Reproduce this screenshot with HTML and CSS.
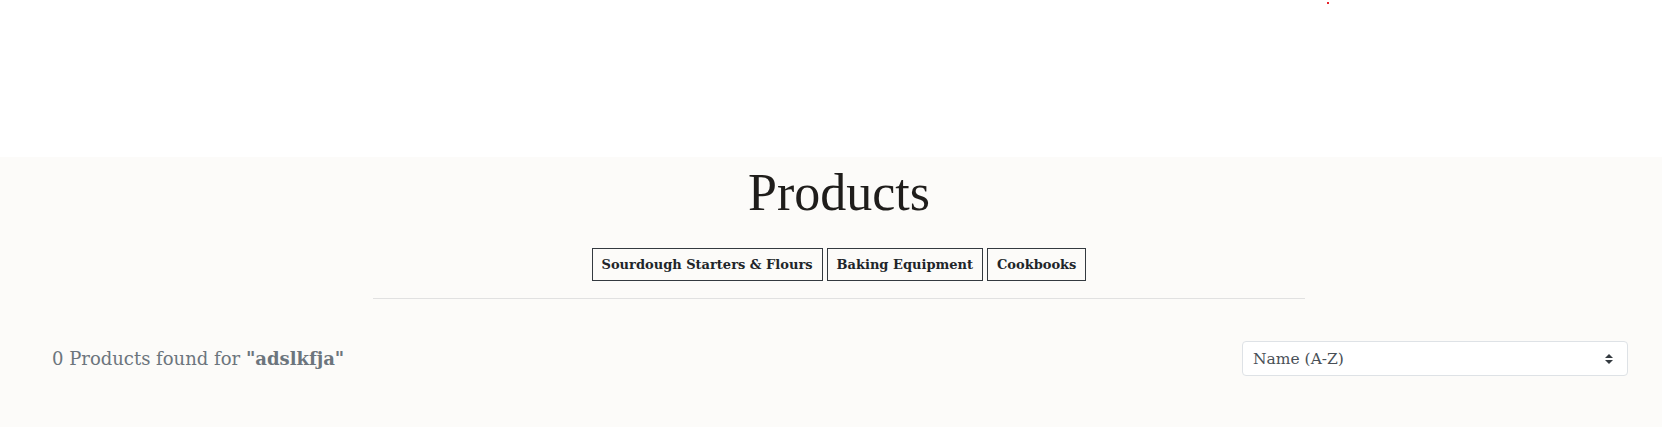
FILE: index.html
```html
<!DOCTYPE html>
<html lang="en">
<head>
<meta charset="utf-8">
<title>Products</title>
<link rel="stylesheet" href="styles.css">
</head>
<body>
<header class="topbar">
  <span class="dot"></span>
</header>
<main class="shop">
  <section class="intro">
    <h1 class="title">Products</h1>
    <nav class="cats">
      <a class="cat" href="#">Sourdough Starters &amp; Flours</a>
      <a class="cat" href="#">Baking Equipment</a>
      <a class="cat" href="#">Cookbooks</a>
    </nav>
    <hr class="rule">
  </section>
  <section class="results">
    <p class="count">0 Products found for <strong>"adslkfja"</strong></p>
    <div class="sort">
      <span class="sort-label">Name (A-Z)</span>
      <svg class="sort-icon" width="8" height="10" viewBox="0 0 4 5"><path fill="#343a40" d="M2 0L0 2h4zm0 5L0 3h4z"/></svg>
    </div>
  </section>
</main>
</body>
</html>
```
FILE: styles.css
```css
html, body {
  margin: 0;
  padding: 0;
  background: #ffffff;
}
body {
  font-family: "DejaVu Serif", "Liberation Serif", serif;
  color: #212529;
  height: 427px;
  overflow: hidden;
}
.topbar {
  height: 157px;
  position: relative;
}
.dot {
  position: absolute;
  left: 1327px;
  top: 2px;
  width: 2px;
  height: 2px;
  background: #e8242c;
}
.shop {
  background: #fcfbf9;
  height: 270px;
}
.intro {
  padding: 5px 0 0 16px;
  display: flex;
  flex-direction: column;
  align-items: center;
}
.title {
  margin: 0;
  font-family: "Liberation Serif", serif;
  font-weight: 400;
  font-size: 52px;
  line-height: 62px;
  color: #1f1d1b;
}
.cats {
  display: flex;
  gap: 4px;
  margin-top: 24px;
}
.cat {
  display: block;
  border: 1px solid #343a40;
  height: 31px;
  line-height: 31px;
  padding: 0 9px;
  font-size: 13px;
  font-weight: 700;
  color: #212529;
  text-decoration: none;
}
.rule {
  width: 932px;
  margin: 17px 0 0;
  border: 0;
  border-top: 1px solid #e1e1e1;
}
.results {
  display: flex;
  justify-content: space-between;
  align-items: center;
  padding: 42px 34px 0 52px;
}
.count {
  margin: 0;
  font-size: 18px;
  color: #6c757d;
}
.count strong {
  font-weight: 700;
}
.sort {
  height: 33px;
  border: 1px solid #dee2e6;
  border-radius: 4px;
  background: #ffffff;
  display: flex;
  align-items: center;
  justify-content: space-between;
  padding: 0 14px 0 10px;
  box-sizing: content-box;
  width: 360px;
}
.sort-label {
  font-size: 15.5px;
  color: #495057;
}
.sort-icon {
  display: block;
}
```
